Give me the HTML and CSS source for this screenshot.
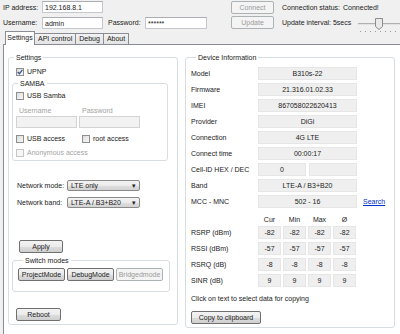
FILE: index.html
```html
<!DOCTYPE html>
<html lang="en">
<head>
    <meta charset="UTF-8">
    <title>Router Tool</title>
    <link rel="stylesheet" href="styles.css">
</head>
<body>
    <div class="top">
        <span class="lbl">IP address:</span>
        <div class="input">192.168.8.1</div>
        <span></span>
        <span></span>
        <span></span>
        <div class="btn disabled">Connect</div>
        <span></span>
        <span class="lbl">Connection status:</span>
        <span class="lbl">Connected!</span>

        <span class="lbl">Username:</span>
        <div class="input">admin</div>
        <span class="lbl pass-lbl">Password:</span>
        <div class="input">******</div>
        <span></span>
        <div class="btn disabled">Update</div>
        <span></span>
        <div class="interval">
            <span class="lbl">Update interval: 5secs</span>
            <div class="slider">
                <div class="track"></div>
                <svg class="thumb" width="8" height="12" viewBox="0 0 8 12">
                    <path d="M0.5 0.5 H7.5 V8.5 L4 11.5 L0.5 8.5 Z" fill="#e9e9e9" stroke="#8c8c8c"/>
                </svg>
                <div class="ticks"></div>
            </div>
        </div>
    </div>

    <div class="tabs">
        <div class="tab active">Settings</div>
        <div class="tab">API control</div>
        <div class="tab">Debug</div>
        <div class="tab">About</div>
    </div>

    <div class="page">
        <fieldset class="group settings">
            <legend>Settings</legend>
            <div class="check-row upnp">
                <span class="cb checked">
                    <svg width="6" height="6" viewBox="0 0 6 6"><path d="M0.7 3 L2.4 4.8 L5.4 0.8" fill="none" stroke="#3b4f8c" stroke-width="1.3"/></svg>
                </span>
                <span>UPNP</span>
            </div>

            <fieldset class="group samba">
                <legend>SAMBA</legend>
                <div class="check-row first">
                    <span class="cb"></span><span>USB Samba</span>
                </div>
                <div class="cred-labels">
                    <span class="muted user-lbl">Username</span>
                    <span class="muted">Password</span>
                </div>
                <div class="cred-inputs">
                    <div class="input off"></div>
                    <div class="input off"></div>
                </div>
                <div class="check-row pair">
                    <div class="check-item"><span class="cb"></span><span>USB access</span></div>
                    <div class="check-item"><span class="cb"></span><span>root access</span></div>
                </div>
                <div class="check-row anon">
                    <span class="cb off"></span><span class="muted">Anonymous access</span>
                </div>
            </fieldset>

            <div class="select-row mode">
                <span class="select-lbl">Network mode:</span>
                <div class="select">LTE only<span class="arrow">&#9662;</span></div>
            </div>
            <div class="select-row band">
                <span class="select-lbl">Network band:</span>
                <div class="select">LTE-A / B3+B20<span class="arrow">&#9662;</span></div>
            </div>

            <div class="btn apply">Apply</div>

            <fieldset class="group switch">
                <legend>Switch modes</legend>
                <div class="mode-btns">
                    <div class="btn">ProjectMode</div>
                    <div class="btn">DebugMode</div>
                    <div class="btn disabled">Bridgedmode</div>
                </div>
            </fieldset>

            <div class="btn reboot">Reboot</div>
        </fieldset>

        <fieldset class="group device">
            <legend>Device Information</legend>
            <div class="info-row first"><span class="info-lbl">Model</span><div class="box wide">B310s-22</div></div>
            <div class="info-row"><span class="info-lbl">Firmware</span><div class="box wide">21.316.01.02.33</div></div>
            <div class="info-row"><span class="info-lbl">IMEI</span><div class="box wide">867058022620413</div></div>
            <div class="info-row"><span class="info-lbl">Provider</span><div class="box wide">DiGi</div></div>
            <div class="info-row"><span class="info-lbl">Connection</span><div class="box wide">4G LTE</div></div>
            <div class="info-row"><span class="info-lbl">Connect time</span><div class="box wide">00:00:17</div></div>
            <div class="info-row"><span class="info-lbl">Cell-ID HEX / DEC</span><div class="box half">0</div><div class="box half"></div></div>
            <div class="info-row"><span class="info-lbl">Band</span><div class="box wide">LTE-A / B3+B20</div></div>
            <div class="info-row"><span class="info-lbl">MCC - MNC</span><div class="box wide">502 - 16</div><a class="search" href="#">Search</a></div>

            <div class="sig-head">
                <span class="info-lbl"></span>
                <span class="col">Cur</span><span class="col">Min</span><span class="col">Max</span><span class="col">&Oslash;</span>
            </div>
            <div class="info-row sig first-sig"><span class="info-lbl">RSRP (dBm)</span><div class="box col">-82</div><div class="box col">-82</div><div class="box col">-82</div><div class="box col">-82</div></div>
            <div class="info-row sig"><span class="info-lbl">RSSI (dBm)</span><div class="box col">-57</div><div class="box col">-57</div><div class="box col">-57</div><div class="box col">-57</div></div>
            <div class="info-row sig"><span class="info-lbl">RSRQ (dB)</span><div class="box col">-8</div><div class="box col">-8</div><div class="box col">-8</div><div class="box col">-8</div></div>
            <div class="info-row sig"><span class="info-lbl">SINR (dB)</span><div class="box col">9</div><div class="box col">9</div><div class="box col">9</div><div class="box col">9</div></div>

            <p class="hint">Click on text to select data for copying</p>
            <div class="btn copy">Copy to clipboard</div>
        </fieldset>
    </div>
</body>
</html>
```

FILE: styles.css
```css
/* Reset */
* {
    margin: 0;
    padding: 0;
    box-sizing: border-box;
}

body {
    width: 400px;
    height: 334px;
    overflow: hidden;
    background-color: #f0f0f0;
    font-family: "Liberation Sans", Arial, sans-serif;
    font-size: 7px;
    line-height: 9px;
    color: #1a1a1a;
}

/* Top connection bar */
.top {
    display: grid;
    grid-template-columns: 39px 61px 42px 62px 24px 43px 8px 61px 1fr;
    grid-template-rows: 12px 13px;
    row-gap: 3px;
    padding: 1px 0 0 3px;
    align-items: center;
}

.lbl {
    white-space: nowrap;
}

.pass-lbl {
    padding-left: 5px;
}

.input {
    height: 12px;
    background-color: #fff;
    border: 1px solid #c5c8ce;
    border-top-color: #abadb3;
    padding: 1px 2px;
    white-space: nowrap;
}

.input.off {
    background-color: #f2f2f2;
    border-color: #d3d3d3;
}

.interval {
    grid-column: 8 / span 2;
    display: flex;
    align-items: center;
}

.interval .lbl {
    width: 76px;
}

.slider {
    position: relative;
    flex: 1;
    height: 13px;
    margin-top: 3px;
}

.track {
    position: absolute;
    left: 0;
    right: 0;
    top: 5px;
    height: 2px;
    background-color: #e2e2e2;
    border-top: 1px solid #b0b0b0;
}

.thumb {
    position: absolute;
    left: 17px;
    top: 0;
}

.ticks {
    position: absolute;
    left: 2px;
    right: 0;
    top: 13px;
    height: 1px;
    background-image: linear-gradient(to right, #9a9a9a 1px, transparent 1px);
    background-size: 5px 1px;
}

/* Buttons */
.btn {
    height: 13px;
    border: 1px solid #707070;
    border-radius: 2px;
    background: linear-gradient(#f3f3f3 0%, #ebebeb 50%, #dddddd 51%, #cfcfcf 100%);
    text-align: center;
    line-height: 11px;
    white-space: nowrap;
}

.btn.disabled {
    background: #f4f4f4;
    border-color: #adb2b5;
    color: #9a9a9a;
}

/* Tabs */
.tabs {
    display: flex;
    align-items: flex-end;
    height: 13px;
    margin: 2px 0 0 5px;
    position: relative;
    z-index: 1;
}

.tab {
    height: 11px;
    padding: 0 3px;
    border: 1px solid #898c95;
    border-bottom: none;
    border-left: none;
    background: linear-gradient(#f2f2f2, #e3e3e3);
    line-height: 10px;
}

.tab.active {
    height: 14px;
    margin-bottom: -1px;
    width: 30px;
    padding: 0;
    text-align: center;
    border-left: 1px solid #898c95;
    background: #fff;
    line-height: 12px;
}

.page {
    display: flex;
    align-items: flex-start;
    gap: 7px;
    height: 300px;
    margin-left: 3px;
    padding: 8px 0 0 4px;
    background-color: #fff;
    border: 1px solid #898c95;
    border-right: none;
}

/* Group boxes */
.group {
    border: 1px solid #d8dde2;
    border-radius: 3px;
}

.group legend {
    margin-left: 5px;
    padding: 0 2px;
    line-height: 9px;
}

.settings {
    width: 170px;
    padding: 0 0 3px 0;
}

.device {
    width: 210px;
    padding: 0 0 3px 5px;
}

/* Check boxes */
.check-row {
    display: flex;
    align-items: center;
    gap: 3px;
    height: 9px;
    padding-left: 7px;
}

.check-row.upnp {
    margin-top: 5px;
}

.cb {
    display: inline-flex;
    align-items: center;
    justify-content: center;
    width: 8px;
    height: 8px;
    border: 1px solid #8e8f8f;
    background: linear-gradient(135deg, #dcdcdc, #f8f8f8);
}

.cb.off {
    border-color: #c6c6c6;
    background: #f6f6f6;
}

.muted {
    color: #a3a3a3;
}

.samba {
    width: 156px;
    margin: 3px 0 0 3px;
    padding-bottom: 3px;
}

.samba .check-row {
    padding-left: 3px;
}

.samba .check-row.first {
    margin-top: 3px;
}

.cred-labels {
    display: flex;
    height: 9px;
    margin-top: 6px;
}

.user-lbl {
    width: 69px;
    padding-left: 6px;
}

.cred-inputs {
    display: flex;
    gap: 2px;
    margin: 1px 0 0 3px;
}

.cred-inputs .input {
    width: 61px;
}

.check-row.pair {
    gap: 0;
    margin-top: 6px;
}

.check-item {
    display: flex;
    align-items: center;
    gap: 3px;
}

.check-item:first-child {
    width: 66px;
}

.check-row.anon {
    margin-top: 5px;
}

/* Drop downs */
.select-row {
    display: flex;
    align-items: center;
    height: 11px;
    padding-left: 8px;
}

.select-row.mode {
    margin-top: 19px;
}

.select-row.band {
    margin-top: 6px;
}

.select-lbl {
    width: 50px;
}

.select {
    position: relative;
    width: 73px;
    height: 11px;
    border: 1px solid #8a8a8a;
    border-radius: 2px;
    background: linear-gradient(#f3f3f3 0%, #ebebeb 50%, #dedede 51%, #d3d3d3 100%);
    padding-left: 3px;
    line-height: 9px;
}

.arrow {
    position: absolute;
    right: 3px;
    top: 0;
    font-size: 7px;
    color: #222;
}

.apply {
    width: 44px;
    margin: 32px 0 0 10px;
}

.switch {
    width: 158px;
    margin: 3px 0 0 3px;
    padding: 3px 0 10px 5px;
}

.mode-btns {
    display: flex;
    gap: 2px;
}

.mode-btns .btn {
    width: 47px;
}

.reboot {
    width: 45px;
    margin: 16px 0 0 7px;
}

/* Device information */
.info-row {
    display: flex;
    align-items: center;
    gap: 3px;
    height: 13px;
    margin-top: 3px;
}

.info-row.first {
    margin-top: 5px;
}

.info-lbl {
    width: 64px;
    white-space: nowrap;
}

.box {
    height: 13px;
    background-color: #efefef;
    border: 1px solid #e6e6e6;
    text-align: center;
    line-height: 11px;
    color: #222;
}

.box.wide {
    width: 99px;
}

.box.half {
    width: 48px;
}

.box.half + .box.half {
    margin-left: 0;
}

.search {
    margin-left: 3px;
    color: #0033cc;
    text-decoration: underline;
}

.sig-head {
    display: flex;
    gap: 2px;
    height: 8px;
    margin-top: 8px;
    line-height: 8px;
}

.sig-head .info-lbl {
    width: 65px;
}

.col {
    width: 23px;
    text-align: center;
}

.info-row.sig {
    gap: 2px;
}

.info-row.sig .info-lbl {
    width: 65px;
}

.info-row.first-sig {
    margin-top: 2px;
}

.hint {
    margin-top: 7px;
    height: 9px;
}

.copy {
    width: 70px;
    margin-top: 8px;
}
```
